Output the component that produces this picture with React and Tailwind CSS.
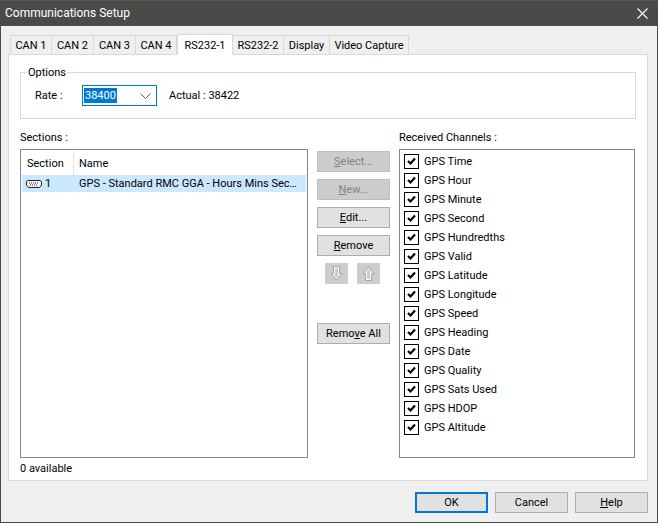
import React from 'react';

const font = { fontFamily: 'Roboto, "Liberation Sans", sans-serif' };

const tabs = [
  ['CAN 1', 'w-[42px]'],
  ['CAN 2', 'w-[42px]'],
  ['CAN 3', 'w-[42px]'],
  ['CAN 4', 'w-[41px]'],
  ['RS232-1', 'w-[56px]'],
  ['RS232-2', 'w-[51px]'],
  ['Display', 'w-[46px]'],
  ['Video Capture', 'w-[79px]'],
];

const channels = [
  'GPS Time',
  'GPS Hour',
  'GPS Minute',
  'GPS Second',
  'GPS Hundredths',
  'GPS Valid',
  'GPS Latitude',
  'GPS Longitude',
  'GPS Speed',
  'GPS Heading',
  'GPS Date',
  'GPS Quality',
  'GPS Sats Used',
  'GPS HDOP',
  'GPS Altitude',
];

const Btn = ({ children, disabled, className = '' }) => (
  <div
    className={`h-[21px] flex items-center justify-center border ${
      disabled
        ? 'bg-[#cccccc] border-[#bfbfbf] text-[#838383]'
        : 'bg-[#e1e1e1] border-[#adadad] text-black'
    } ${className}`}
  >
    {children}
  </div>
);

const Arrow = ({ up }) => (
  <svg width="13" height="15" viewBox="0 0 13 15" className={up ? '' : 'rotate-180'}>
    <path d="M6.5 1 L12 7.5 H9.5 V14.5 H3.5 V7.5 H1 Z" fill="none" stroke="#a6a6a6" strokeWidth="1" />
    <path d="M6.5 2.5 L10 6.5 H8.5 V13.5 H4.5 V6.5 H3 Z" fill="none" stroke="#ffffff" strokeWidth="1" />
  </svg>
);

const Check = () => (
  <div className="w-[15px] h-[15px] border border-black bg-white flex items-center justify-center shrink-0">
    <svg width="11" height="11" viewBox="0 0 11 11">
      <path d="M2 5 L4.5 7.5 L9 2.5" fill="none" stroke="#000" strokeWidth="2.2" />
    </svg>
  </div>
);

const SerialIcon = () => (
  <svg width="16" height="8" viewBox="0 0 16 8" className="mr-[3px] shrink-0">
    <path d="M1.5 .5 H14.5 L15.5 2 V5 L13.5 7.5 H2.5 L.5 5 V2 Z" fill="#f4f8fb" stroke="#222" strokeWidth="1" />
    <path d="M3 3 H13 M4 5 H12" stroke="#222" strokeWidth="1" strokeDasharray="1 1" />
  </svg>
);

export default function App() {
  return (
    <div style={font} className="w-[658px] h-[523px] flex flex-col bg-[#efefef] text-[11px] leading-[15px] text-black border-r border-b border-l border-[#4a4a48] overflow-hidden">
      {/* title bar */}
      <div className="h-[26px] bg-[#4c4a48] text-white text-[12px] flex items-center justify-between pl-[4px] pr-[9px] shrink-0 border-t border-[#5a5a58]">
        <span>Communications Setup</span>
        <svg width="11" height="11" viewBox="0 0 11 11">
          <path d="M.5 .5 L10.5 10.5 M10.5 .5 L.5 10.5" stroke="#fff" strokeWidth="1.1" />
        </svg>
      </div>

      <div className="flex-1 flex flex-col pt-[8px] pl-[7px] pr-[9px]">
        {/* tabs */}
        <div className="h-[20px] flex items-end pl-[2px] relative z-10">
          {tabs.map(([label, width]) =>
            label === 'RS232-1' ? (
              <div key={label} className={`${width} h-[21px] -mb-[1px] bg-white border border-b-0 border-[#d9d9d9] flex items-center justify-center whitespace-nowrap shrink-0`}>
                {label}
              </div>
            ) : (
              <div key={label} className={`${width} h-[19px] bg-[#efefef] border border-b-0 border-l-0 first:border-l border-[#d9d9d9] flex items-center justify-center whitespace-nowrap shrink-0`}>
                {label}
              </div>
            )
          )}
        </div>

        {/* tab panel */}
        <div className="h-[427px] bg-white border border-[#d9d9d9] pt-[17px] px-[11px] flex flex-col">
          <div className="relative h-[47px] border border-[#d9d9d9] flex items-center pl-[14px] mb-[11px] shrink-0">
            <span className="absolute -top-[8px] left-[6px] bg-white px-px">Options</span>
            <span className="w-[47px]">Rate :</span>
            <div className="w-[75px] h-[21px] border border-[#0078d7] flex items-center pl-[1px] pr-[5px] justify-between">
              <span className="bg-[#0078d7] text-white px-px">38400</span>
              <svg width="11" height="6" viewBox="0 0 11 6">
                <path d="M.5 .5 L5.5 5.5 L10.5 .5" fill="none" stroke="#555" strokeWidth="1" />
              </svg>
            </div>
            <span className="ml-[12px]">Actual : 38422</span>
          </div>

          <div className="flex h-[15px] mb-[4px] shrink-0">
            <span className="w-[379px]">Sections :</span>
            <span>Received Channels :</span>
          </div>

          <div className="flex h-[309px] shrink-0">
            {/* sections list */}
            <div className="w-[288px] border border-[#828790] p-px flex flex-col">
              <div className="h-[24px] flex items-center shrink-0">
                <div className="w-[52px] h-full flex items-center pl-[5px] border-r border-[#e5e5e5] shrink-0">Section</div>
                <div className="pl-[5px]">Name</div>
              </div>
              <div className="h-[17px] bg-[#cce8ff] flex items-center pl-[4px] whitespace-nowrap overflow-hidden shrink-0">
                <SerialIcon />
                <span className="w-[34px] shrink-0">1</span>
                <span>GPS - Standard RMC GGA - Hours Mins Sec…</span>
              </div>
            </div>

            {/* middle buttons */}
            <div className="w-[91px] pl-[9px] pr-[9px] flex flex-col shrink-0 pt-[2px]">
              <Btn disabled className="mb-[7px]"><span><u>S</u>elect...</span></Btn>
              <Btn disabled className="mb-[7px]"><span><u>N</u>ew...</span></Btn>
              <Btn className="mb-[7px]"><span><u>E</u>dit...</span></Btn>
              <Btn className="mb-[7px]"><span><u>R</u>emove</span></Btn>
              <div className="flex gap-[9px] pl-[8px]">
                <div className="w-[23px] h-[21px] bg-[#cccccc] flex items-center justify-center"><Arrow /></div>
                <div className="w-[23px] h-[21px] bg-[#cccccc] flex items-center justify-center"><Arrow up /></div>
              </div>
              <Btn className="mt-[39px]"><span>Remo<u>v</u>e All</span></Btn>
            </div>

            {/* channels */}
            <div className="w-[236px] border border-[#828790] pt-[2px] pl-[4px] flex flex-col">
              {channels.map((c) => (
                <div key={c} className="h-[19px] flex items-center gap-[5px]">
                  <Check />
                  <span>{c}</span>
                </div>
              ))}
            </div>
          </div>

          <div className="mt-[3px]">0 available</div>
        </div>

        {/* footer */}
        <div className="flex justify-end gap-[7px] mt-[11px]">
          <Btn className="w-[73px] !border-2 !border-[#0078d7]">OK</Btn>
          <Btn className="w-[73px]">Cancel</Btn>
          <Btn className="w-[73px]"><span><u>H</u>elp</span></Btn>
        </div>
      </div>
    </div>
  );
}
